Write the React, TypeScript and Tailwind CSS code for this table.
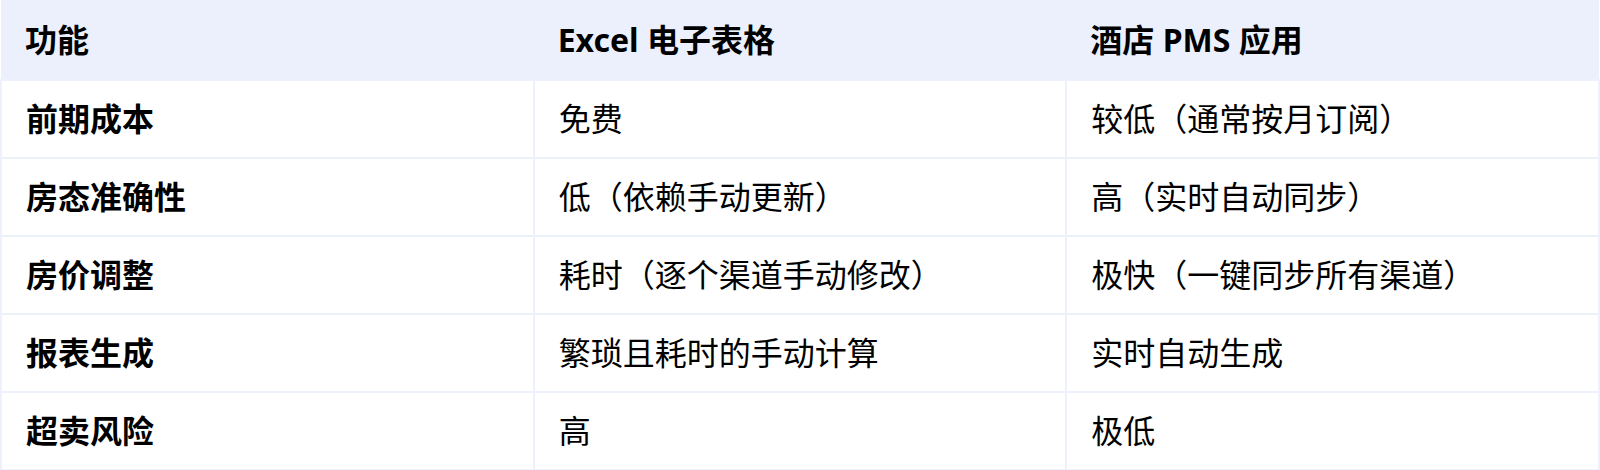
import React from "react";

const rows = [
  ["前期成本", "免费", "较低（通常按月订阅）"],
  ["房态准确性", "低（依赖手动更新）", "高（实时自动同步）"],
  ["房价调整", "耗时（逐个渠道手动修改）", "极快（一键同步所有渠道）"],
  ["报表生成", "繁琐且耗时的手动计算", "实时自动生成"],
  ["超卖风险", "高", "极低"],
];

export default function App() {
  return (
    <div
      className="w-[1600px] bg-white text-black"
      style={{ fontFamily: '"Noto Sans", "Noto Sans CJK SC", sans-serif' }}
    >
      <table className="w-full table-fixed border-collapse text-[32px]">
        <thead>
          <tr className="bg-[#ebf0fc]">
            <th className="h-[80px] px-6 text-left font-bold">功能</th>
            <th className="h-[80px] px-6 text-left font-bold">Excel 电子表格</th>
            <th className="h-[80px] px-6 text-left font-bold">酒店 PMS 应用</th>
          </tr>
        </thead>
        <tbody>
          {rows.map((row) => (
            <tr key={row[0]}>
              <td className="h-[78px] border-2 border-[#edf1fb] px-6 font-bold">{row[0]}</td>
              <td className="h-[78px] border-2 border-[#edf1fb] px-6">{row[1]}</td>
              <td className="h-[78px] border-2 border-[#edf1fb] px-6">{row[2]}</td>
            </tr>
          ))}
        </tbody>
      </table>
    </div>
  );
}
